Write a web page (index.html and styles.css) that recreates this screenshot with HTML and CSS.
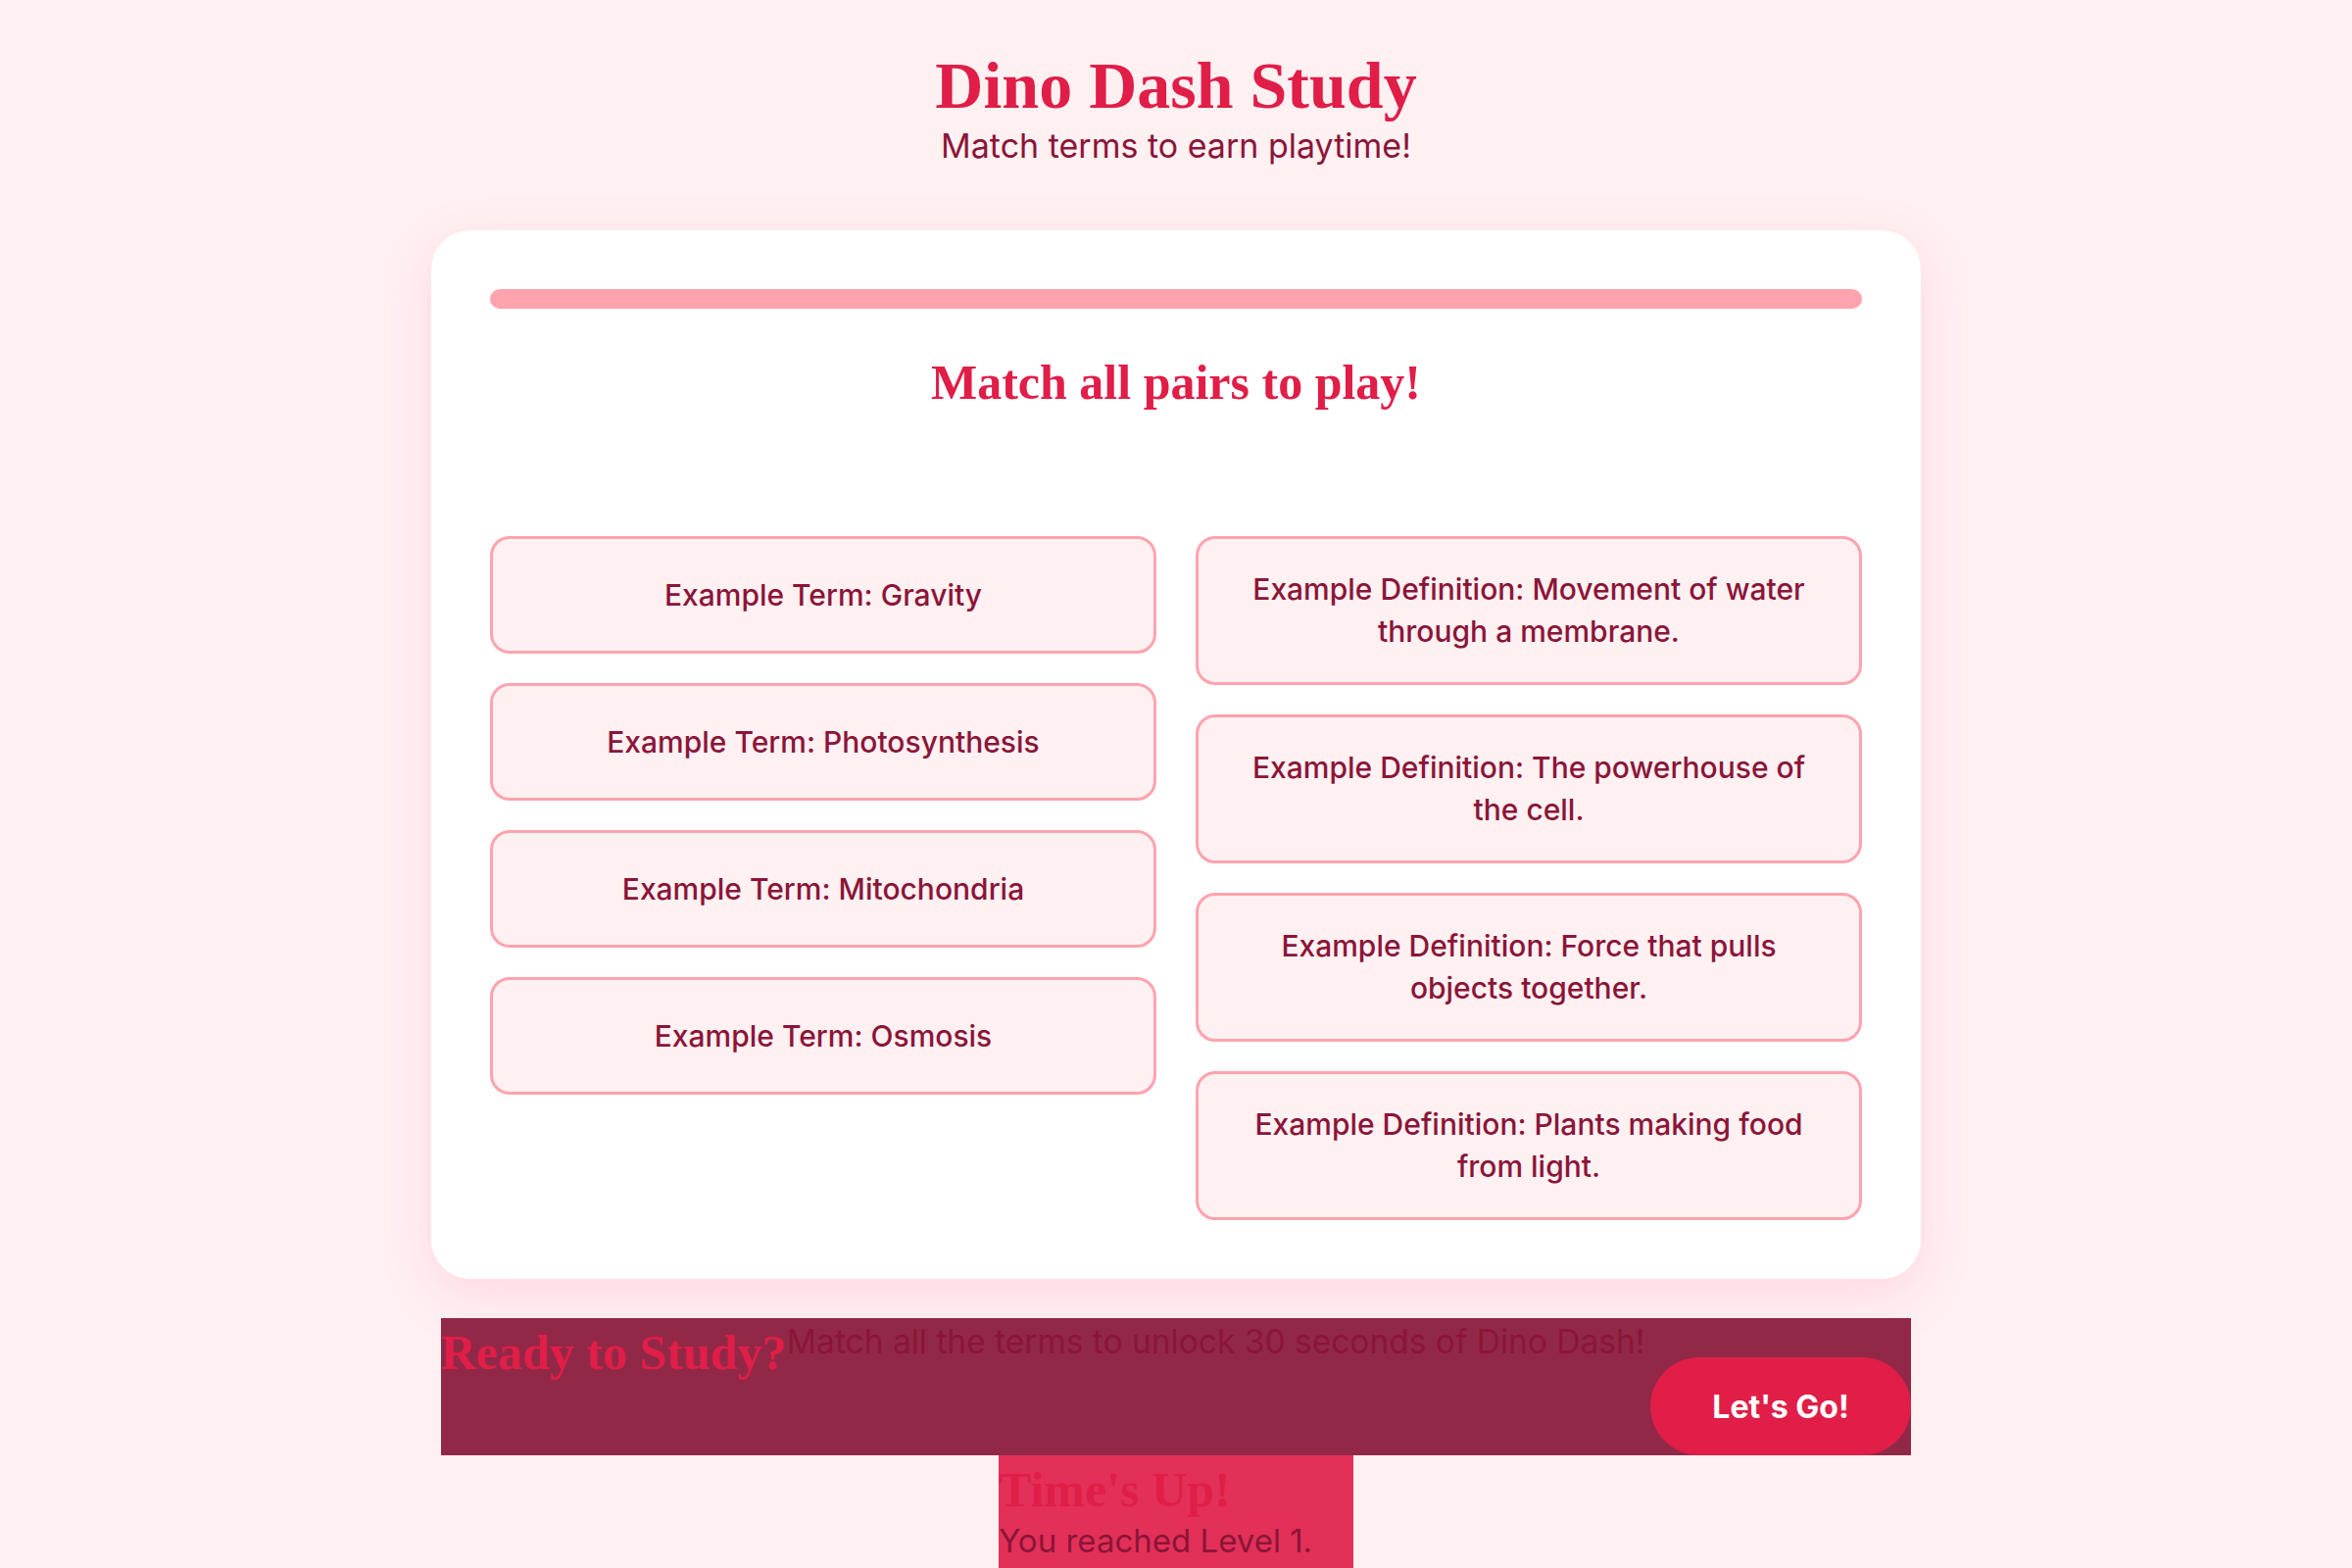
FILE: index.html
```html
<!DOCTYPE html>
<html lang="en">
<head>
    <meta charset="UTF-8">
    <meta name="viewport" content="width=device-width, initial-scale=1.0">
    <title>Dino Dash Study</title>
    <link rel="stylesheet" href="styles.css">
</head>
<body>
    <header class="site-header">
        <h1 class="title">Dino Dash Study</h1>
        <p class="tagline">Match terms to earn playtime!</p>
    </header>

    <main class="study-card">
        <div class="progress">
            <div class="progress-fill"></div>
        </div>
        <h2 class="round-title">Match all pairs to play!</h2>
        <div class="feedback"></div>

        <div class="match-grid">
            <div class="match-column">
                <div class="match-item term">Example Term: Gravity</div>
                <div class="match-item term">Example Term: Photosynthesis</div>
                <div class="match-item term">Example Term: Mitochondria</div>
                <div class="match-item term">Example Term: Osmosis</div>
            </div>
            <div class="match-column">
                <div class="match-item definition">Example Definition: Movement of water through a membrane.</div>
                <div class="match-item definition">Example Definition: The powerhouse of the cell.</div>
                <div class="match-item definition">Example Definition: Force that pulls objects together.</div>
                <div class="match-item definition">Example Definition: Plants making food from light.</div>
            </div>
        </div>
    </main>

    <section class="start-screen">
        <div class="start-text">
            <h2>Ready to Study?</h2>
            <p>Match all the terms to unlock 30 seconds of Dino Dash!</p>
        </div>
        <button class="start-button">Let's Go!</button>
    </section>

    <section class="game-over">
        <h2>Time's Up!</h2>
        <p>You reached Level 1.</p>
    </section>
</body>
</html>
```
FILE: styles.css
```css
body {
    margin: 0;
    background: #fff0f2;
    color: #8b1538;
    font-family: Inter, "Noto Sans", sans-serif;
}

h1, h2 {
    font-family: "Liberation Serif", "DejaVu Serif", serif;
    font-weight: 700;
    color: #e01e48;
}

/* header */
.site-header {
    padding-top: 47px;
    text-align: center;
}

.title {
    margin: 0;
    font-size: 68px;
    line-height: 80px;
}

.tagline {
    margin: 2px 0 0;
    font-size: 34px;
    line-height: 40px;
}

/* main card */
.study-card {
    max-width: 1400px;
    margin: 66px auto 0;
    padding: 60px;
    background: #fff;
    border-radius: 40px;
    box-shadow: 0 16px 48px rgba(255, 150, 170, 0.25);
}

.progress {
    height: 20px;
    border-radius: 10px;
    background: #ffa3ae;
    overflow: hidden;
}

.progress-fill {
    width: 0;
    height: 100%;
    background: #e01e48;
}

.round-title {
    margin: 45px 0 0;
    font-size: 50px;
    line-height: 60px;
    text-align: center;
}

.feedback {
    min-height: 47px;
    margin: 40px 0;
}

.match-grid {
    display: grid;
    grid-template-columns: 1fr 1fr;
    gap: 40px;
    align-items: start;
}

.match-column {
    display: flex;
    flex-direction: column;
    gap: 30px;
}

.match-item {
    display: flex;
    align-items: center;
    justify-content: center;
    box-sizing: border-box;
    padding: 30px;
    background: #fff0f2;
    border: 3px solid #ffa3ae;
    border-radius: 20px;
    font-size: 30px;
    font-weight: 500;
    line-height: 43px;
    text-align: center;
    cursor: pointer;
}

.match-item.term {
    min-height: 120px;
    padding-top: 0;
    padding-bottom: 0;
}

/* start screen */
.start-screen {
    display: flex;
    flex-direction: column;
    width: 1500px;
    margin: 40px auto 0;
    background: #922847;
}

.start-text {
    display: flex;
    align-items: flex-start;
    height: 40px;
    white-space: nowrap;
}

.start-text h2 {
    margin: 5px 0 0;
    font-size: 50px;
    line-height: 60px;
}

.start-text p {
    margin: 4px 0 0;
    font-size: 33.5px;
    line-height: 40px;
}

.start-button {
    align-self: flex-end;
    width: 266px;
    height: 100px;
    border: none;
    border-radius: 50px;
    background: #e01e48;
    color: #fff;
    font-family: Inter, "Noto Sans", sans-serif;
    font-size: 32px;
    font-weight: 700;
    cursor: pointer;
}

/* game over */
.game-over {
    width: 362px;
    margin: 0 auto;
    padding: 5px 0 40px;
    background: #e33058;
}

.game-over h2 {
    margin: 0;
    font-size: 50px;
    line-height: 60px;
}

.game-over p {
    margin: 2px 0 0;
    font-size: 33px;
    line-height: 40px;
}
```
